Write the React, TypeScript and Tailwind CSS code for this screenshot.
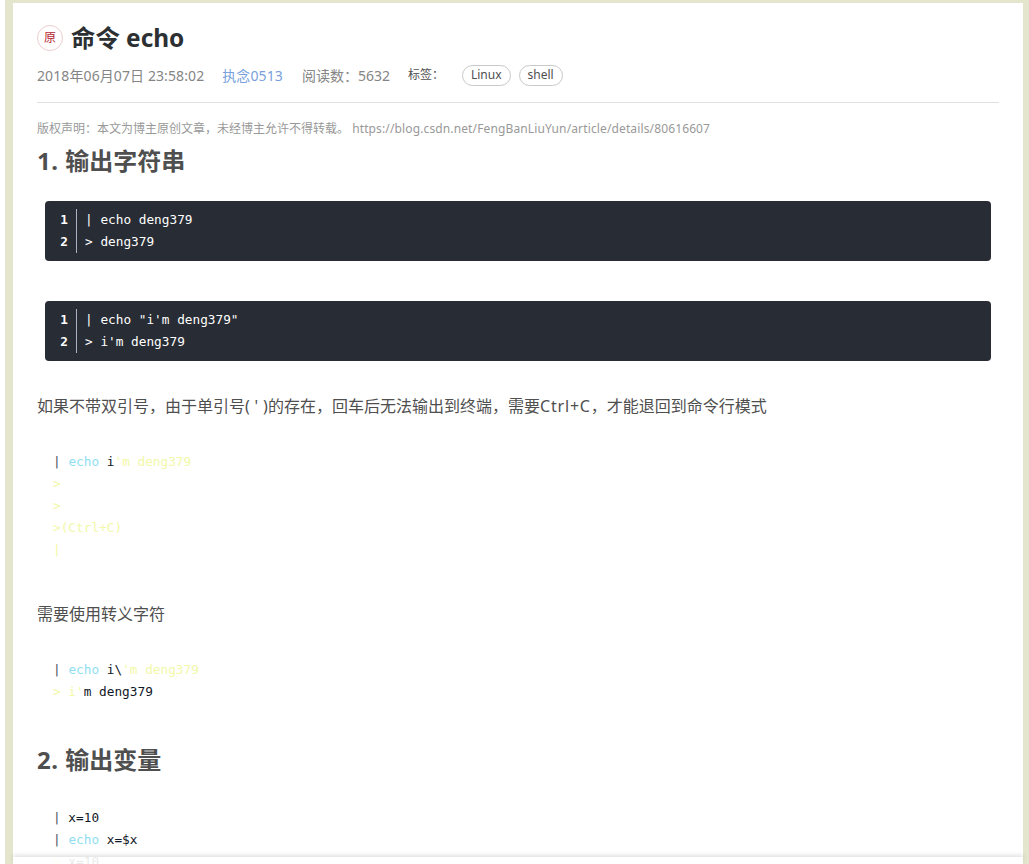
import React from "react";

const cjk = '"Noto Sans","Noto Sans CJK SC",sans-serif';

function DarkBlock({ lines }: { lines: [string, string][] }) {
  return (
    <div className="mx-2 flex h-[60px] items-center rounded-[4px] bg-[#282c34] px-2 text-[12.75px] font-['DejaVu_Sans_Mono',monospace] leading-[22px] text-white">
      <div className="w-[24px] border-r border-[#abb2bf] pr-2 text-right font-bold">
        <div>1</div>
        <div>2</div>
      </div>
      <div className="pl-2">
        {lines.map(([p, t]) => (
          <div key={p + t} className="whitespace-pre">
            <span className="text-white">{p}</span> {t}
          </div>
        ))}
      </div>
    </div>
  );
}

function Line({ children }: { children: React.ReactNode }) {
  return <div className="h-[22px] whitespace-pre">{children}</div>;
}

const Y = ({ children }: { children: React.ReactNode }) => <span className="text-[#f2f8a8]">{children}</span>;
const B = ({ children }: { children: React.ReactNode }) => <span className="text-[#8ee0f2]">{children}</span>;
const Bar = () => <span className="text-[#4b5563]">|</span>;

function Plain({ children, className = "" }: { children: React.ReactNode; className?: string }) {
  return (
    <div className={"ml-4 text-[12.75px] font-['DejaVu_Sans_Mono',monospace] leading-[22px] text-[#111827] " + className}>
      {children}
    </div>
  );
}

export default function App() {
  return (
    <div className="relative flex h-[864px] overflow-hidden bg-[#e3e6cd]" style={{ fontFamily: cjk }}>
      <div className="h-full w-[5px] shrink-0 bg-white" />
      <main className="ml-2 mt-[3px] h-full w-[1010px] shrink-0 bg-white px-6 pt-5">
        <header className="flex h-[30px] items-center">
          <span className="flex h-[26px] w-[26px] items-center justify-center rounded-full border border-[#eccdd0] text-[12px] leading-none text-[#b4262e]">
            原
          </span>
          <h1 className="ml-2 text-[24.4px] font-bold leading-[30px] text-[#2c3033]">命令 echo</h1>
        </header>
        <div className="mt-[10px] flex h-6 items-center text-[14px] text-[#858585]">
          <span className="tracking-[0.1px]">2018年06月07日 23:58:02</span>
          <span className="ml-[18px] tracking-[0.1px] text-[#789fdc]">执念0513</span>
          <span className="ml-[19px]">阅读数：5632</span>
          <span className="ml-[18px] text-[12px] text-[#4f4f4f]">标签：</span>
          <span className="ml-[18px] flex h-[21px] items-center rounded-full border border-[#c8c8c8] px-2 text-[12px] text-[#4f4f4f]">Linux</span>
          <span className="ml-2 flex h-[21px] items-center rounded-full border border-[#c8c8c8] px-2 text-[12px] text-[#4f4f4f]">shell</span>
        </div>
        <hr className="mt-[15px] border-[#e0e0e0]" />
        <p className="mt-[17px] text-[12px] leading-[18px] text-[#999999]">
          版权声明：本文为博主原创文章，未经博主允许不得转载。 <span className="tracking-[0.13px]">https://blog.csdn.net/FengBanLiuYun/article/details/80616607</span>
        </p>
        <h2 className="mt-[6px] text-[24px] font-bold leading-[34px] text-[#4f4f4f]"><span className="tracking-[0.5px]">1. </span>输出字符串</h2>
        <div className="mt-[23px]">
          <DarkBlock lines={[["|", "echo deng379"], [">", "deng379"]]} />
        </div>
        <div className="mt-10">
          <DarkBlock lines={[["|", 'echo "i\'m deng379"'], [">", "i'm deng379"]]} />
        </div>
        <p className="mt-[32px] text-[16px] leading-[26px] text-[#4f4f4f]">
          如果不带双引号，由于单引号<span className="tracking-[0.3px]">( ' )</span>的存在，回车后无法输出到终端，需要<span className="tracking-[0.8px]">Ctrl+C</span>，才能退回到命令行模式
        </p>
        <Plain className="mt-[32px]">
          <Line><Bar /> <B>echo</B> i<Y>'m deng379</Y></Line>
          <Line><Y>&gt;</Y></Line>
          <Line><Y>&gt;</Y></Line>
          <Line><Y>&gt;(Ctrl+C)</Y></Line>
          <Line><Y>|</Y></Line>
        </Plain>
        <p className="mt-[40px] text-[16px] leading-[26px] text-[#4f4f4f]">需要使用转义字符</p>
        <Plain className="mt-[32px]">
          <Line><Bar /> <B>echo</B> i\<Y>'m deng379</Y></Line>
          <Line><Y>&gt; i'</Y>m deng379</Line>
        </Plain>
        <h2 className="mt-[40px] text-[24px] font-bold leading-[34px] text-[#4f4f4f]"><span className="tracking-[0.5px]">2. </span>输出变量</h2>
        <Plain className="mt-[30px]">
          <Line><Bar /> x=10</Line>
          <Line><Bar /> <B>echo</B> x=$x</Line>
          <Line><Y>&gt;</Y> x=10</Line>
        </Plain>
      </main>
      <div className="absolute bottom-0 left-[13px] h-[7px] w-[1010px] bg-white/90 shadow-[0_-2px_4px_rgba(0,0,0,0.12)]" />
    </div>
  );
}
